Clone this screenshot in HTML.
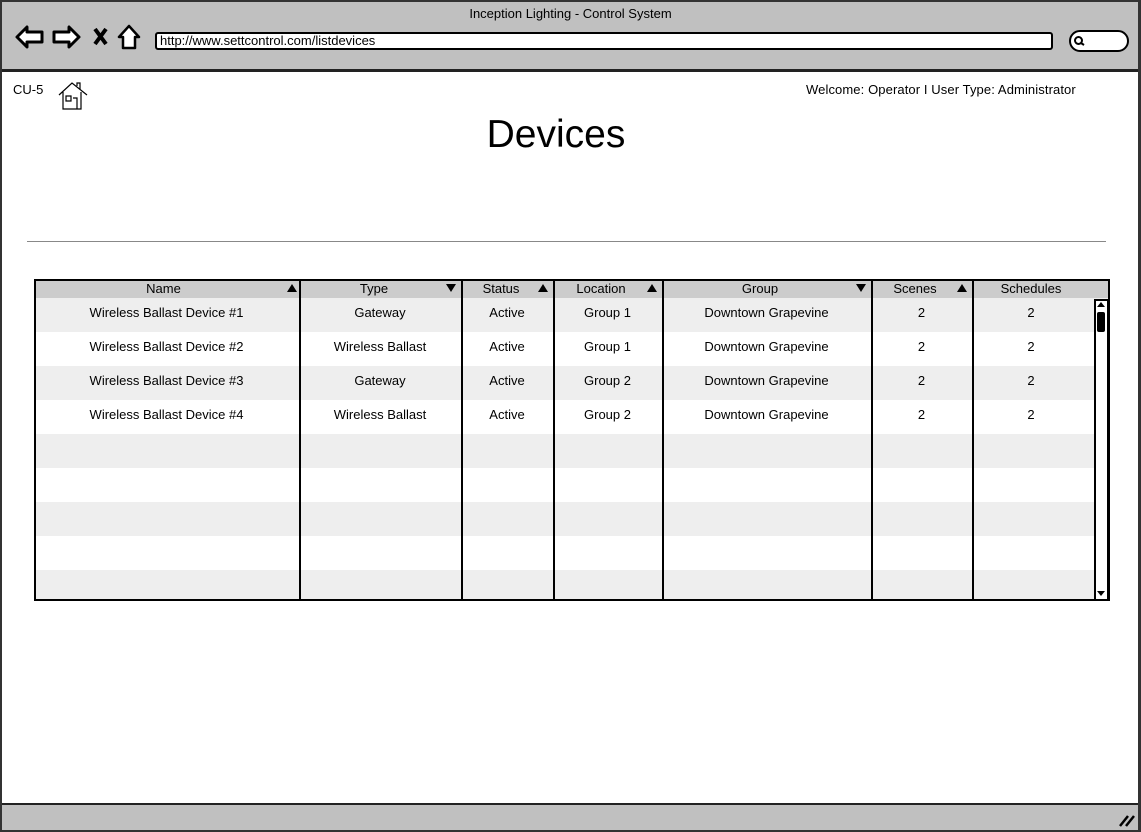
<!DOCTYPE html>
<html><head><meta charset="utf-8"><style>
*{margin:0;padding:0;box-sizing:border-box}
body{width:1141px;height:832px;position:relative;background:#fff;font-family:"Liberation Sans",sans-serif;overflow:hidden;color:#000}
.a{position:absolute}
.t{position:absolute;font-size:13px;text-align:center;white-space:nowrap}
</style></head><body>
<div class="a" style="left:0;top:0;width:1141px;height:832px;border:2px solid #333;border-right-width:3px;border-bottom-width:2px"></div>
<div class="a" style="left:2px;top:2px;width:1136px;height:70px;background:#c0c0c0;border-bottom:3px solid #222"></div>
<div class="t" style="left:0;width:1141px;top:6px;font-size:13px">Inception Lighting - Control System</div>
<svg class="a" style="left:14px;top:22px" width="130" height="30" viewBox="0 0 130 30">
<path d="M3 15 L13 5 L13 10 L28 10 L28 20 L13 20 L13 25 Z" fill="#fff" stroke="#000" stroke-width="3" stroke-linejoin="round"/>
<path d="M65 15 L55 5 L55 10 L40 10 L40 20 L55 20 L55 25 Z" fill="#fff" stroke="#000" stroke-width="3" stroke-linejoin="round"/>
<path d="M81 7 L92 22 M92 7 L81 22" stroke="#000" stroke-width="4"/>
<path d="M115 4 L105 15 L109 15 L109 26 L121 26 L121 15 L125 15 Z" fill="#fff" stroke="#000" stroke-width="2.5" stroke-linejoin="round"/>
</svg>
<div class="a" style="left:155px;top:32px;width:898px;height:18px;background:#fff;border:2px solid #000;border-radius:3px"></div>
<div class="a" style="left:160px;top:33px;font-size:13px">http://www.settcontrol.com/listdevices</div>
<div class="a" style="left:1069px;top:30px;width:60px;height:22px;background:#fff;border:2px solid #000;border-radius:12px"></div>
<svg class="a" style="left:1073px;top:35px" width="14" height="12"><circle cx="5.5" cy="5.5" r="3.5" fill="none" stroke="#000" stroke-width="2"/><path d="M8 8 L11 10" stroke="#000" stroke-width="2"/></svg>
<div class="a" style="left:13px;top:82px;font-size:13px">CU-5</div>
<svg class="a" style="left:57px;top:79px" width="32" height="32"><path d="M2 16 L15 4 L30 16 M6 13 L6 30 L24 30 L24 13 M9 17 h5 v5 h-5z M16 19 h4 v11 h-4" fill="none" stroke="#000" stroke-width="1.2"/><path d="M20 7 v-3 h3 v6" fill="none" stroke="#000" stroke-width="1.2"/></svg>
<div class="a" style="left:806px;top:82px;font-size:13px;letter-spacing:0.1px">Welcome: Operator I User Type: Administrator</div>
<div class="t" style="left:0;width:1112px;top:113px;font-size:39px">Devices</div>
<div class="a" style="left:27px;top:241px;width:1079px;height:1px;background:#888"></div>

<div class="a" style="left:34px;top:279px;width:1076px;height:322px;border:2px solid #000;overflow:hidden;background:#fff">
<div class="a" style="left:0;top:0;width:1074px;height:17px;background:#ccc"></div>
<div class="a" style="left:0;top:17px;width:1074px;height:34px;background:#eee"></div>
<div class="a" style="left:0;top:85px;width:1074px;height:34px;background:#eee"></div>
<div class="a" style="left:0;top:153px;width:1074px;height:34px;background:#eee"></div>
<div class="a" style="left:0;top:221px;width:1074px;height:34px;background:#eee"></div>
<div class="a" style="left:0;top:289px;width:1074px;height:34px;background:#eee"></div>
<div class="a" style="left:263px;top:0;width:2px;height:322px;background:#000"></div>
<div class="a" style="left:425px;top:0;width:2px;height:322px;background:#000"></div>
<div class="a" style="left:517px;top:0;width:2px;height:322px;background:#000"></div>
<div class="a" style="left:626px;top:0;width:2px;height:322px;background:#000"></div>
<div class="a" style="left:835px;top:0;width:2px;height:322px;background:#000"></div>
<div class="a" style="left:936px;top:0;width:2px;height:322px;background:#000"></div>
<div class="a" style="left:1058px;top:18px;width:15px;height:302px;background:#fff;border:2px solid #000"></div>
<div class="a" style="left:1061px;top:31px;width:8px;height:20px;background:#000;border-radius:2px"></div>
</div>
<svg class="a" style="left:0;top:0" width="1141" height="832">
<g fill="#000"><path d="M287 292 L297 292 L292 284Z"/><path d="M446 284 L456 284 L451 292Z"/><path d="M538 292 L548 292 L543 284Z"/><path d="M647 292 L657 292 L652 284Z"/><path d="M856 284 L866 284 L861 292Z"/><path d="M957 292 L967 292 L962 284Z"/><path d="M1097 307 L1105 307 L1101 302Z"/><path d="M1097 591 L1105 591 L1101 596Z"/></g>
<path d="M1120 826 L1128 816 M1126 826 L1134 816" stroke="#000" stroke-width="2.5"/>
</svg>
<div class="t" style="left:34px;width:259px;top:281px">Name</div>
<div class="t" style="left:299px;width:150px;top:281px">Type</div>
<div class="t" style="left:461px;width:80px;top:281px">Status</div>
<div class="t" style="left:553px;width:96px;top:281px">Location</div>
<div class="t" style="left:662px;width:196px;top:281px">Group</div>
<div class="t" style="left:871px;width:88px;top:281px">Scenes</div>
<div class="t" style="left:972px;width:118px;top:281px">Schedules</div>

<div class="t" style="left:34px;width:265px;top:305px">Wireless Ballast Device #1</div>
<div class="t" style="left:34px;width:265px;top:339px">Wireless Ballast Device #2</div>
<div class="t" style="left:34px;width:265px;top:373px">Wireless Ballast Device #3</div>
<div class="t" style="left:34px;width:265px;top:407px">Wireless Ballast Device #4</div>
<div class="t" style="left:299px;width:162px;top:305px">Gateway</div>
<div class="t" style="left:299px;width:162px;top:339px">Wireless Ballast</div>
<div class="t" style="left:299px;width:162px;top:373px">Gateway</div>
<div class="t" style="left:299px;width:162px;top:407px">Wireless Ballast</div>
<div class="t" style="left:461px;width:92px;top:305px">Active</div>
<div class="t" style="left:461px;width:92px;top:339px">Active</div>
<div class="t" style="left:461px;width:92px;top:373px">Active</div>
<div class="t" style="left:461px;width:92px;top:407px">Active</div>
<div class="t" style="left:553px;width:109px;top:305px">Group 1</div>
<div class="t" style="left:553px;width:109px;top:339px">Group 1</div>
<div class="t" style="left:553px;width:109px;top:373px">Group 2</div>
<div class="t" style="left:553px;width:109px;top:407px">Group 2</div>
<div class="t" style="left:662px;width:209px;top:305px">Downtown Grapevine</div>
<div class="t" style="left:662px;width:209px;top:339px">Downtown Grapevine</div>
<div class="t" style="left:662px;width:209px;top:373px">Downtown Grapevine</div>
<div class="t" style="left:662px;width:209px;top:407px">Downtown Grapevine</div>
<div class="t" style="left:871px;width:101px;top:305px">2</div>
<div class="t" style="left:871px;width:101px;top:339px">2</div>
<div class="t" style="left:871px;width:101px;top:373px">2</div>
<div class="t" style="left:871px;width:101px;top:407px">2</div>
<div class="t" style="left:972px;width:118px;top:305px">2</div>
<div class="t" style="left:972px;width:118px;top:339px">2</div>
<div class="t" style="left:972px;width:118px;top:373px">2</div>
<div class="t" style="left:972px;width:118px;top:407px">2</div>

<div class="a" style="left:2px;top:803px;width:1136px;height:27px;background:#c0c0c0;border-top:2px solid #222"></div>
<svg class="a" style="left:0;top:0" width="1141" height="832"><path d="M1120 826 L1128 816 M1126 826 L1134 816" stroke="#000" stroke-width="2.5"/></svg>
</body></html>
